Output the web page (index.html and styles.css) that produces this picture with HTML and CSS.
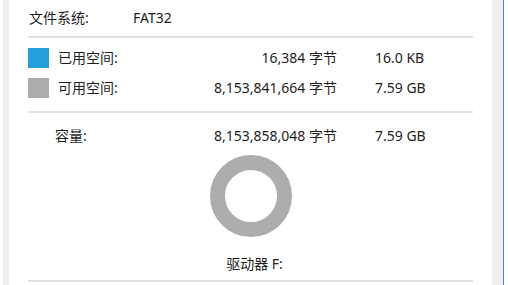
FILE: index.html
```html
<!DOCTYPE html>
<html lang="zh-CN">
<head>
<meta charset="utf-8">
<title>属性</title>
<link rel="stylesheet" href="styles.css">
</head>
<body>
<div class="window">
  <div class="edge-left"></div>
  <div class="panel">
    <div class="fs-row">
      <span class="fs-label">文件系统:</span>
      <span class="fs-value">FAT32</span>
    </div>
    <div class="sep sep-top"></div>
    <div class="space-rows">
      <div class="row">
        <span class="swatch used"></span>
        <span class="label">已用空间:</span>
        <span class="bytes">16,384 字节</span>
        <span class="size">16.0 KB</span>
      </div>
      <div class="row">
        <span class="swatch free"></span>
        <span class="label">可用空间:</span>
        <span class="bytes">8,153,841,664 字节</span>
        <span class="size">7.59 GB</span>
      </div>
    </div>
    <div class="sep sep-mid"></div>
    <div class="row cap-row">
      <span class="label cap-label">容量:</span>
      <span class="bytes">8,153,858,048 字节</span>
      <span class="size">7.59 GB</span>
    </div>
    <div class="chart">
      <svg width="82" height="82" viewBox="0 0 82 82" aria-hidden="true">
        <circle cx="41" cy="41" r="33.5" fill="none" stroke="#adadad" stroke-width="15"/>
      </svg>
    </div>
    <div class="drive">驱动器 F:</div>
    <div class="sep sep-bottom"></div>
  </div>
  <div class="edge-right"></div>
</div>
</body>
</html>
```

FILE: styles.css
```css
html, body {
  margin: 0;
  padding: 0;
  background: #ffffff;
}

body {
  font-family: "Noto Sans", "Noto Sans CJK SC", sans-serif;
  font-size: 14px;
  color: #1e1e1e;
}

.window {
  display: flex;
  width: 508px;
  height: 285px;
  overflow: hidden;
}

.edge-left {
  margin-left: 3px;
  width: 6px;
  background: #f0f0f0;
}

.panel {
  flex: 1;
  padding: 0 19px;
  display: flex;
  flex-direction: column;
}

.edge-right {
  width: 11px;
  background: #f0f0f0;
  border-right: 1px solid #3a8ee6;
  margin-right: 4px;
}

.fs-row {
  margin-top: 8px;
  height: 20px;
  line-height: 20px;
  display: grid;
  grid-template-columns: 104px 1fr;
  padding-left: 1px;
}

.sep {
  height: 2px;
  background: #e2e2e2;
}

.sep-top {
  margin-top: 8px;
}

.space-rows {
  margin-top: 10px;
  display: flex;
  flex-direction: column;
  gap: 10px;
}

.row {
  display: grid;
  grid-template-columns: 30px 80px 199px 38px 1fr;
  height: 20px;
  line-height: 20px;
  align-items: center;
}

.swatch {
  width: 21px;
  height: 20px;
}

.swatch.used {
  background: #26a0da;
}

.swatch.free {
  background: #adadad;
}

.label {
  grid-column: 2;
}

.bytes {
  grid-column: 3;
  text-align: right;
  white-space: nowrap;
}

.size {
  grid-column: 5;
  white-space: nowrap;
}

.sep-mid {
  margin-top: 13px;
}

.cap-row {
  margin-top: 13px;
}

.cap-label {
  margin-left: -3px;
}

.chart {
  margin-top: 9px;
  display: flex;
  justify-content: center;
}

.chart svg {
  display: block;
}

.drive {
  margin-top: 17px;
  height: 20px;
  line-height: 20px;
  text-align: center;
  padding-left: 8px;
}

.sep-bottom {
  margin-top: 6px;
}
```
